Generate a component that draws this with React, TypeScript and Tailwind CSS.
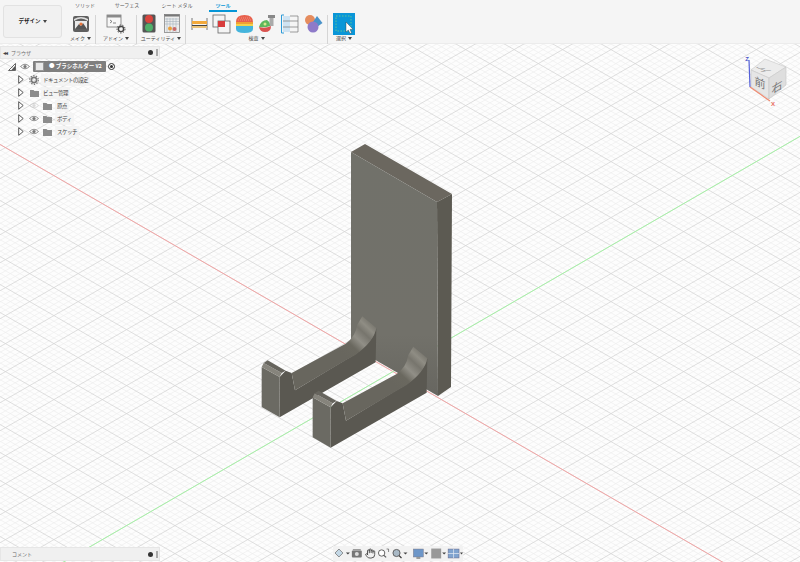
import { Hand } from "lucide-react";

const jp = "font-['Noto_Sans_CJK_JP','Noto_Sans',sans-serif]";

// isometric grid, numbers measured from the green and red axes
const ox = 393;
const oy = 371.6;
const slope = 0.578;

function gridLines() {
  const lines = [];
  for (let k = -150; k <= 150; k++) {
    const major = k % 5 === 0;
    const d = k * 5.6;
    lines.push({ key: "a" + k, major, y1: oy + d - slope * ox, y2: oy + d + slope * (800 - ox) });
    lines.push({ key: "b" + k, major, y1: oy + d + slope * ox, y2: oy + d - slope * (800 - ox) });
  }
  return lines;
}

function Caret() {
  return <span className="inline-block ml-[2px] align-middle w-0 h-0 border-l-[2px] border-r-[2px] border-t-[3px] border-l-transparent border-r-transparent border-t-[#444]" />;
}

function MakeIcon() {
  return (
    <svg width="18" height="18" viewBox="0 0 18 18">
      <rect x="1" y="1" width="16" height="16" rx="2" fill="#5f5f5f" />
      <path d="M2 6 Q9 1 16 6 V4 Q9 0 2 4Z" fill="#ddd" />
      <rect x="3" y="6" width="12" height="8" fill="#e9e9e9" />
      <path d="M3 14 L7 9 L9 11 L11 8 L15 14Z" fill="#555" />
      <circle cx="9" cy="9" r="1.6" fill="#e8743b" />
    </svg>
  );
}

function AddinIcon() {
  return (
    <svg width="20" height="20" viewBox="0 0 20 20">
      <rect x="1" y="1" width="14" height="12" fill="#f7f7f7" stroke="#777" strokeWidth="0.8" />
      <rect x="1" y="1" width="14" height="2.5" fill="#8a8a8a" />
      <path d="M4 6 L6 7.5 L4 9 M7 9 H10" fill="none" stroke="#555" strokeWidth="0.7" />
      <circle cx="15" cy="15" r="2.6" fill="none" stroke="#444" strokeWidth="1.4" />
      <circle cx="15" cy="15" r="4" fill="none" stroke="#444" strokeWidth="1" strokeDasharray="1.4 1.4" />
    </svg>
  );
}

function LightIcon() {
  return (
    <svg width="14" height="19" viewBox="0 0 14 19">
      <rect x="0.5" y="0.5" width="13" height="18" rx="1.5" fill="#555" />
      <circle cx="7" cy="5" r="4" fill="#d9453d" />
      <circle cx="7" cy="13.5" r="4" fill="#4fb06a" />
    </svg>
  );
}

function TableIcon() {
  return (
    <svg width="16" height="19" viewBox="0 0 16 19">
      <rect x="0.5" y="0.5" width="15" height="18" fill="#ececec" stroke="#777" strokeWidth="0.7" />
      <rect x="0.5" y="0.5" width="15" height="2" fill="#777" />
      <path d="M3 4 V18 M6 4 V18 M9 4 V18 M12 4 V18 M1 5 H15 M1 7.5 H15 M1 10 H15" stroke="#9aa8b5" strokeWidth="0.5" />
      <circle cx="6" cy="14.5" r="2" fill="#e8a03b" />
      <circle cx="10.5" cy="15" r="2" fill="#c96a6a" />
    </svg>
  );
}

function RulerIcon() {
  return (
    <svg width="17" height="14" viewBox="0 0 17 14">
      <path d="M1 1 V13 M16 1 V13" stroke="#555" strokeWidth="0.8" />
      <rect x="1" y="4" width="15" height="3" fill="#f2a93b" />
      <path d="M1 8.5 H16" stroke="#444" strokeWidth="1" />
      <rect x="1" y="9" width="15" height="2" fill="#e8c27a" />
    </svg>
  );
}

function SquaresIcon() {
  return (
    <svg width="19" height="20" viewBox="0 0 19 20">
      <rect x="1" y="1" width="12" height="12" fill="#f4f4f4" stroke="#666" strokeWidth="0.8" />
      <rect x="6" y="7" width="12" height="12" fill="#f4f4f4" stroke="#666" strokeWidth="0.8" />
      <rect x="6" y="7" width="7" height="6" fill="#d83c3c" />
    </svg>
  );
}

function DomeIcon() {
  return (
    <svg width="19" height="20" viewBox="0 0 19 20">
      <path d="M1 8 Q1 1 9.5 1 Q18 1 18 8Z" fill="#e8604c" />
      <path d="M1 8 H18 V10 H1Z" fill="#f0a033" />
      <path d="M1 10 H18 V12 H1Z" fill="#f2d24a" />
      <path d="M1 12 H18 V15 Q18 19 9.5 19 Q1 19 1 15Z" fill="#45b4dc" />
      <path d="M4 4 H15 M3 6 H16" stroke="#f3a79b" strokeWidth="0.7" strokeDasharray="1 1" />
    </svg>
  );
}

function BoltIcon() {
  return (
    <svg width="18" height="20" viewBox="0 0 18 20">
      <rect x="10" y="1" width="7" height="3" fill="#888" />
      <rect x="11.5" y="4" width="4" height="8" fill="#aaa" />
      <path d="M1 13 Q3 6 9 6 Q12 8 12 12 Q7 14 1 13Z" fill="#5cb85c" />
      <path d="M1 13 Q7 15 13 12 Q13 18 7 18 Q2 18 1 13Z" fill="#d9534f" />
      <circle cx="7" cy="10" r="1.5" fill="#d6e88a" />
    </svg>
  );
}

function SectionIcon() {
  return (
    <svg width="20" height="20" viewBox="0 0 20 20">
      <rect x="3" y="2" width="7" height="16" fill="#cfe3f2" />
      <path d="M10 2 H18 V18 H10 M10 7 H18 M10 13 H18 M3 7 H10 M3 13 H10" fill="none" stroke="#777" strokeWidth="0.7" />
      <path d="M4 1 H1.5 V19 H4" fill="none" stroke="#2d9bd8" strokeWidth="1" />
    </svg>
  );
}

function ShapesIcon() {
  return (
    <svg width="19" height="20" viewBox="0 0 19 20">
      <circle cx="6" cy="6" r="5" fill="#e58c5e" />
      <path d="M13 2 L18.5 9 L13 13 L9 8Z" fill="#4a92c9" />
      <circle cx="9" cy="13" r="5.5" fill="#8e7ac9" />
    </svg>
  );
}

function SelectIcon() {
  return (
    <svg width="22" height="22" viewBox="0 0 22 22">
      <rect width="22" height="22" fill="#0a96d8" />
      <rect x="3" y="3" width="15" height="15" fill="none" stroke="#6fd18b" strokeWidth="0.8" strokeDasharray="1.5 1.5" />
      <path d="M13 9 V19 L15.3 17 L17 20.5 L18.6 19.8 L17 16.5 L20 16.2Z" fill="#fff" stroke="#333" strokeWidth="0.4" />
    </svg>
  );
}

function Sep() {
  return <div className="w-px h-[29px] bg-[#d5d5d5] mt-[2px] shrink-0" />;
}

function ToolGroup({ label, width, children }: { label: string; width: string; children: React.ReactNode }) {
  return (
    <div className={`${width} flex flex-col items-center shrink-0`}>
      <div className="h-[21px] flex items-center justify-center">{children}</div>
      <div className="h-[8px] text-[5px] leading-[8px] text-[#444] whitespace-nowrap">
        {label}
        <Caret />
      </div>
    </div>
  );
}

function Toolbar() {
  return (
    <header className={`${jp} h-[44px] bg-[#f5f5f5] border-b border-[#ececec] flex shrink-0`}>
      <div className="ml-[3px] mt-[5px] w-[59px] h-[33px] rounded-[3px] border border-[#e2e2e2] bg-[#f1f1f1] flex items-center justify-center text-[5.5px] font-bold text-[#222]">
        デザイン
        <Caret />
      </div>
      <div className="ml-[4px] flex flex-col">
        <div className="h-[12px] flex text-[5px] leading-[10px] text-[#555] text-center whitespace-nowrap">
          <div className="w-[38px]">ソリッド</div>
          <div className="w-[46px]">サーフェス</div>
          <div className="w-[54px]">シート メタル</div>
          <div className="ml-[5px] w-[28px] border-b-2 border-[#0696d7] font-bold text-[#0696d7]">ツール</div>
        </div>
        <div className="flex mt-[1px]">
          <ToolGroup label="メイク" width="w-[29px]"><MakeIcon /></ToolGroup>
          <Sep />
          <ToolGroup label="アドイン" width="w-[40px]"><AddinIcon /></ToolGroup>
          <Sep />
          <ToolGroup label="ユーティリティ" width="w-[48px]">
            <div className="flex gap-[8px] items-center"><LightIcon /><TableIcon /></div>
          </ToolGroup>
          <Sep />
          <ToolGroup label="検査" width="w-[141px]">
            <div className="flex gap-[4px] items-center">
              <RulerIcon /><SquaresIcon /><DomeIcon /><BoltIcon /><SectionIcon /><ShapesIcon />
            </div>
          </ToolGroup>
          <Sep />
          <ToolGroup label="選択" width="w-[32px]"><SelectIcon /></ToolGroup>
        </div>
      </div>
    </header>
  );
}

function Eye({ faded }: { faded?: boolean }) {
  return (
    <svg width="10" height="7" viewBox="0 0 10 7" className={faded ? "opacity-25" : ""}>
      <path d="M0.5 3.5 Q5 -1 9.5 3.5 Q5 8 0.5 3.5Z" fill="none" stroke="#777" strokeWidth="0.8" />
      <circle cx="5" cy="3.5" r="1.6" fill="#777" />
    </svg>
  );
}

function Folder() {
  return (
    <svg width="9" height="8" viewBox="0 0 9 8">
      <path d="M0 1 H3.5 L4.5 2 H9 V8 H0Z" fill="#8c8c8c" />
    </svg>
  );
}

function Gear() {
  return (
    <svg width="10" height="10" viewBox="0 0 10 10">
      <circle cx="5" cy="5" r="2.6" fill="none" stroke="#777" strokeWidth="1.6" />
      <circle cx="5" cy="5" r="4.3" fill="none" stroke="#777" strokeWidth="1.2" strokeDasharray="1.4 1.3" />
    </svg>
  );
}

function Expander() {
  return (
    <svg width="6" height="9" viewBox="0 0 6 9" className="shrink-0">
      <path d="M0.7 0.7 L5.2 4.5 L0.7 8.3Z" fill="#fff" stroke="#444" strokeWidth="0.9" />
    </svg>
  );
}

function PanelDot() {
  return (
    <div className="ml-auto flex items-center gap-[3px]">
      <div className="w-[5px] h-[5px] rounded-full bg-[#333]" />
      <div className="w-[2px] h-[7px] border-x border-[#aaa]" />
    </div>
  );
}

function TreeRow({ label, eye, faded, icon }: { label: string; eye?: boolean; faded?: boolean; icon: React.ReactNode }) {
  return (
    <div className="h-[13px] flex items-center pl-[18px]">
      <Expander />
      <div className="w-[15px] flex items-center justify-end">{eye ? <Eye faded={faded} /> : icon}</div>
      {eye && <div className="ml-[4px]">{icon}</div>}
      <div className={`${eye ? "ml-[3px]" : "ml-[2px]"} px-[2px] h-[12px] leading-[12px] bg-[#f3f3f3]/80 text-[5.5px] tracking-[-0.5px] text-[#444] whitespace-nowrap`}>
        {label}
      </div>
    </div>
  );
}

function BrowserPanel() {
  return (
    <div className="w-[160px]">
      <div className="h-[13px] bg-[#f0f0f0] border border-[#e6e6e6] flex items-center pl-[2px] pr-[1px] text-[5px] text-[#666]">
        <span className="text-[6px] text-[#444] mr-[4px] tracking-[-1px]">◂◂</span>
        ブラウザ
        <PanelDot />
      </div>
      <div className="mt-[1px]">
        <div className="h-[13px] flex items-center pl-[8px]">
          <svg width="8" height="8" viewBox="0 0 8 8">
            <path d="M0.5 7.5 H7.5 V0.5Z" fill="none" stroke="#555" strokeWidth="0.9" />
            <path d="M3.5 7 L7 3 V7Z" fill="#555" />
          </svg>
          <div className="ml-[4px]"><Eye /></div>
          <div className="ml-[3px] w-[73px] h-[11px] bg-[#7f7f7f] flex items-center rounded-[1px] pl-[2px]">
            <div className="w-[9px] h-[9px] bg-[#e8e8e8] border border-[#999] rounded-[1px]" />
            <span className="ml-[5px] font-bold text-[5.5px] text-white whitespace-nowrap">● ブラシホルダー v2</span>
          </div>
          <div className="ml-[2px] w-[7px] h-[7px] rounded-full border border-[#333] bg-white flex items-center justify-center">
            <div className="w-[3px] h-[3px] rounded-full bg-[#333]" />
          </div>
        </div>
        <TreeRow label="ドキュメントの設定" icon={<Gear />} />
        <TreeRow label="ビュー管理" icon={<Folder />} />
        <TreeRow label="原点" eye faded icon={<Folder />} />
        <TreeRow label="ボディ" eye icon={<Folder />} />
        <TreeRow label="スケッチ" eye icon={<Folder />} />
      </div>
    </div>
  );
}

function CommentPanel() {
  return (
    <div className="h-[14px] w-[160px] bg-[#f0f0f0] border border-[#e6e6e6] flex items-center pl-[11px] pr-[1px] text-[5px] text-[#666]">
      コメント
      <PanelDot />
    </div>
  );
}

function BottomBar() {
  return (
    <div className="absolute left-[333px] bottom-[1px] w-[130px] h-[15px] bg-[#f2f2f2] flex items-center pl-[1px]">
      <svg width="130" height="15" viewBox="0 0 130 15">
        {/* orbit */}
        <path d="M5 3 L9 7 L5 11 L1 7Z" fill="#c4d8e6" stroke="#666" strokeWidth="0.7" />
        <path d="M12 6.5 L16 6.5 L14 8.5Z" fill="#444" />
        {/* look at */}
        <rect x="18" y="4.5" width="10" height="7" rx="1" fill="#777" />
        <circle cx="23" cy="8" r="2" fill="#ddd" />
        <rect x="19" y="3" width="8" height="1.5" fill="#999" />
        <Hand x={31} y={2} width={11} height={11} color="#444" strokeWidth={2} />
        {/* zoom fit */}
        <circle cx="48" cy="7" r="3.2" fill="#fff" stroke="#555" strokeWidth="0.9" />
        <path d="M50.3 9.3 L52.5 11.5" stroke="#555" strokeWidth="1.1" />
        <path d="M53 3 H55 V6" fill="none" stroke="#555" strokeWidth="0.7" />
        {/* zoom */}
        <circle cx="63" cy="7" r="3.6" fill="#a9b9c6" stroke="#555" strokeWidth="0.9" />
        <path d="M65.6 9.6 L68 12" stroke="#333" strokeWidth="1.2" />
        <path d="M70 6.5 L74 6.5 L72 8.5Z" fill="#444" />
        {/* display */}
        <rect x="80" y="3" width="10" height="8" fill="#6d96c8" stroke="#778" strokeWidth="0.5" />
        <rect x="83" y="11" width="4" height="2" fill="#999" />
        <path d="M91 6.5 L95 6.5 L93 8.5Z" fill="#444" />
        {/* visual style */}
        <rect x="98" y="2.5" width="10" height="10" fill="#999" />
        <path d="M109 6.5 L113 6.5 L111 8.5Z" fill="#444" />
        {/* viewports */}
        <rect x="115" y="3" width="11" height="9" fill="#7fa3cf" stroke="#668" strokeWidth="0.5" />
        <path d="M120.5 3 V12 M115 7.5 H126" stroke="#e8eef5" strokeWidth="0.7" />
        <path d="M127 6.5 L130 6.5 L128.5 8.5Z" fill="#444" />
      </svg>
    </div>
  );
}

function Arm({ dx, dy }: { dx: number; dy: number }) {
  // points read off the reference at 3x, hence the scale on the group
  return (
    <g transform={`translate(${240 + dx / 3} ${300 + dy / 3}) scale(0.3333)`}>
      <path d="M272 322 L290 303 L308 310 L318 362 L470 270 Q535 235 555 195 L562 175 L560 278 L272 443Z" fill="#5a5851" />
      <path d="M308 310 L470 222 Q500 200 505 165 L520 140 L562 175 Q555 215 500 255 L470 272 L318 362Z" fill="url(#armTop)" />
      <path d="M218 292 L272 322 L272 443 L218 412Z" fill="#6b6a63" />
      <path d="M218 292 L224 280 L278 310 L272 322Z" fill="#86847c" />
      <path d="M224 280 L236 272 L290 303 L278 310Z" fill="#67655e" />
    </g>
  );
}

function ModelCanvas() {
  return (
    <svg className="absolute inset-0" width="800" height="518" viewBox="0 44 800 518">
      <defs>
        <linearGradient id="plate" x1="0" y1="0" x2="0" y2="1">
          <stop offset="0" stopColor="#71716a" />
          <stop offset="0.75" stopColor="#72716a" />
          <stop offset="1" stopColor="#676660" />
        </linearGradient>
        <linearGradient id="armTop" gradientUnits="userSpaceOnUse" x1="455" y1="250" x2="545" y2="155">
          <stop offset="0" stopColor="#68665e" />
          <stop offset="0.3" stopColor="#6a685f" />
          <stop offset="0.5" stopColor="#918f87" />
          <stop offset="0.7" stopColor="#77756d" />
          <stop offset="0.85" stopColor="#8f8d84" />
          <stop offset="1" stopColor="#77756d" />
        </linearGradient>
      </defs>
      <rect x="0" y="44" width="800" height="518" fill="#fdfdfd" />
      {gridLines().filter((l) => !l.major).map((l) => (
        <line key={l.key} x1="0" x2="800" y1={l.y1} y2={l.y2} stroke="#eeeeee" strokeWidth="0.7" />
      ))}
      {gridLines().filter((l) => l.major).map((l) => (
        <line key={l.key} x1="0" x2="800" y1={l.y1} y2={l.y2} stroke="#d6d6d6" strokeWidth="0.8" />
      ))}
      <line x1="0" y1={oy - slope * ox} x2="800" y2={oy + slope * (800 - ox)} stroke="#f2a5a5" strokeWidth="1" />
      <line x1="0" y1={oy + slope * ox} x2="800" y2={oy - slope * (800 - ox)} stroke="#a6f2a6" strokeWidth="1" />

      {/* upright plate */}
      <path d="M351 152 L365 144 L452 194 L437 202Z" fill="#6b675f" />
      <path d="M437 202 L452 194 L451 387 L438 396Z" fill="#5c5a52" />
      <path d="M351 152 L437 202 L438 396 L351 346Z" fill="url(#plate)" />

      <Arm dx={-153} dy={-91} />
      <Arm dx={0} dy={0} />

      {/* view cube */}
      <path d="M751 70 L765 59 L786 67 L769 78Z" fill="#ececec" stroke="#c8c8c8" strokeWidth="0.6" />
      <path d="M751 70 L769 78 L769 99 L751 87Z" fill="#e6e6e6" stroke="#c8c8c8" strokeWidth="0.6" />
      <path d="M769 78 L786 67 L786 85 L769 99Z" fill="#dedede" stroke="#c8c8c8" strokeWidth="0.6" />
      <text transform="matrix(1 -0.15 1 0.4 766 71)" fontSize="11" fill="#777" textAnchor="middle" fontFamily="'Noto Sans CJK JP',sans-serif">上</text>
      <text transform="matrix(1 0.45 0 1 760 87)" fontSize="11" fill="#777" textAnchor="middle" fontFamily="'Noto Sans CJK JP',sans-serif">前</text>
      <text transform="matrix(1 -0.6 0 1 777 91)" fontSize="11" fill="#777" textAnchor="middle" fontFamily="'Noto Sans CJK JP',sans-serif">右</text>
      <line x1="749" y1="60" x2="750" y2="87" stroke="#5560d8" strokeWidth="1.2" />
      <line x1="750" y1="87" x2="770" y2="101" stroke="#ef8a70" strokeWidth="1.2" />
      <text x="747" y="61" fontSize="6" fontWeight="bold" fill="#4a55c8" textAnchor="middle" fontFamily="'Liberation Sans',sans-serif">Z</text>
      <text x="773" y="106" fontSize="6" fontWeight="bold" fill="#e86a5a" textAnchor="middle" fontFamily="'Liberation Sans',sans-serif">X</text>
    </svg>
  );
}

export default function App() {
  return (
    <div className={`${jp} w-[800px] h-[562px] flex flex-col overflow-hidden bg-white`}>
      <Toolbar />
      <main className="relative flex-1">
        <ModelCanvas />
        <div className="absolute inset-0 pt-[2px] pb-px flex flex-col justify-between pointer-events-none">
          <BrowserPanel />
          <CommentPanel />
        </div>
        <BottomBar />
      </main>
    </div>
  );
}
